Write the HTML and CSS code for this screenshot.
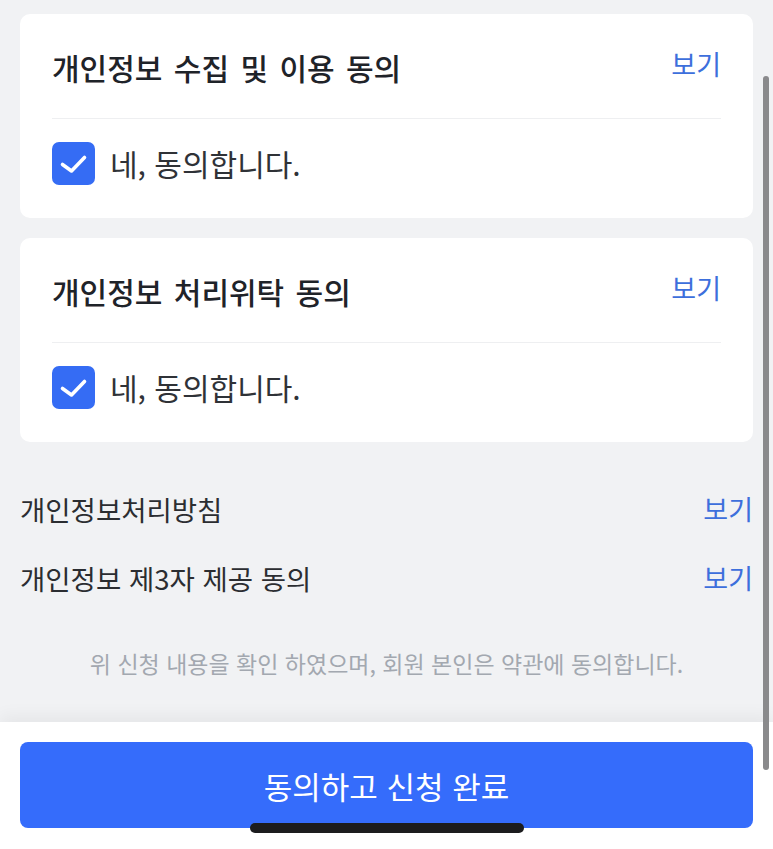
FILE: index.html
```html
<!DOCTYPE html>
<html lang="ko">
<head>
    <meta charset="UTF-8">
    <meta name="viewport" content="width=device-width, initial-scale=1.0">
    <title>약관 동의</title>
    <link rel="stylesheet" href="styles.css">
</head>
<body>

    <div class="screen">
        <div class="content">
            <div class="card">
                <div class="card-head">
                    <h3>개인정보 수집 및 이용 동의</h3>
                    <a class="view" href="#">보기</a>
                </div>
                <label class="agree">
                    <span class="checkbox">
                        <svg viewBox="0 0 43 43" width="43" height="43"><path d="M10.5 22.5 L19.5 29 L32.5 15.5" fill="none" stroke="#fff" stroke-width="3.6" stroke-linecap="round" stroke-linejoin="round"/></svg>
                    </span>
                    네, 동의합니다.
                </label>
            </div>

            <div class="card">
                <div class="card-head">
                    <h3>개인정보 처리위탁 동의</h3>
                    <a class="view" href="#">보기</a>
                </div>
                <label class="agree">
                    <span class="checkbox">
                        <svg viewBox="0 0 43 43" width="43" height="43"><path d="M10.5 22.5 L19.5 29 L32.5 15.5" fill="none" stroke="#fff" stroke-width="3.6" stroke-linecap="round" stroke-linejoin="round"/></svg>
                    </span>
                    네, 동의합니다.
                </label>
            </div>

            <ul class="links">
                <li><span>개인정보처리방침</span><a class="view" href="#">보기</a></li>
                <li><span>개인정보 제3자 제공 동의</span><a class="view" href="#">보기</a></li>
            </ul>

            <p class="note">위 신청 내용을 확인 하였으며, 회원 본인은 약관에 동의합니다.</p>
        </div>

        <div class="footer">
            <button type="button">동의하고 신청 완료</button>
        </div>
    </div>

    <div class="scrollbar"></div>
    <div class="home-bar"></div>

</body>
</html>
```

FILE: styles.css
```css
/* General Reset */
* {
    margin: 0;
    padding: 0;
    box-sizing: border-box;
    font-family: "Noto Sans CJK KR", "Noto Sans", sans-serif;
}

body {
    background: #f1f2f4;
    color: #2b2d31;
    overflow: hidden;
}

.screen {
    height: 100vh;
    display: flex;
    flex-direction: column;
}

.content {
    flex: 1;
    padding: 14px 20px 0;
}

.card {
    background: #fff;
    border-radius: 10px;
    padding: 0 32px;
    margin-bottom: 20px;
}

.card-head {
    display: flex;
    justify-content: space-between;
    align-items: center;
    height: 105px;
    border-bottom: 1px solid #eeeff1;
}

.card-head h3 {
    font-size: 30px;
    font-weight: 500;
    color: #1f2329;
    word-spacing: 3px;
    padding-top: 2px;
}

.view {
    font-size: 27px;
    color: #3d6fdc;
    text-decoration: none;
}

.card-head .view {
    margin-top: -6px;
}

.agree {
    display: flex;
    align-items: center;
    gap: 15px;
    height: 99px;
    padding-bottom: 11px;
    font-size: 30px;
    color: #2f3237;
}

.checkbox {
    width: 43px;
    height: 43px;
    border-radius: 7px;
    background: #356cf4;
    display: flex;
}

.links {
    list-style: none;
    margin-top: 32px;
}

.links li {
    display: flex;
    justify-content: space-between;
    align-items: center;
    height: 69px;
    font-size: 27.5px;
    color: #2b2d31;
}

.note {
    margin-top: 34px;
    text-align: center;
    font-size: 23px;
    color: #a3a8b0;
}

.footer {
    height: 127px;
    background: #fff;
    padding: 20px 20px 0;
    box-shadow: 0 -6px 16px rgba(0, 0, 0, 0.05);
}

.footer button {
    width: 100%;
    height: 86px;
    background: #356cfb;
    color: #fff;
    border: none;
    border-radius: 8px;
    font-size: 31px;
    cursor: pointer;
}

.scrollbar {
    position: absolute;
    left: 763px;
    top: 76px;
    width: 6px;
    height: 694px;
    border-radius: 3px;
    background: #8a8a8c;
}

.home-bar {
    position: absolute;
    left: 250px;
    top: 823px;
    width: 274px;
    height: 10px;
    border-radius: 5px;
    background: #1c1c1e;
}
```
